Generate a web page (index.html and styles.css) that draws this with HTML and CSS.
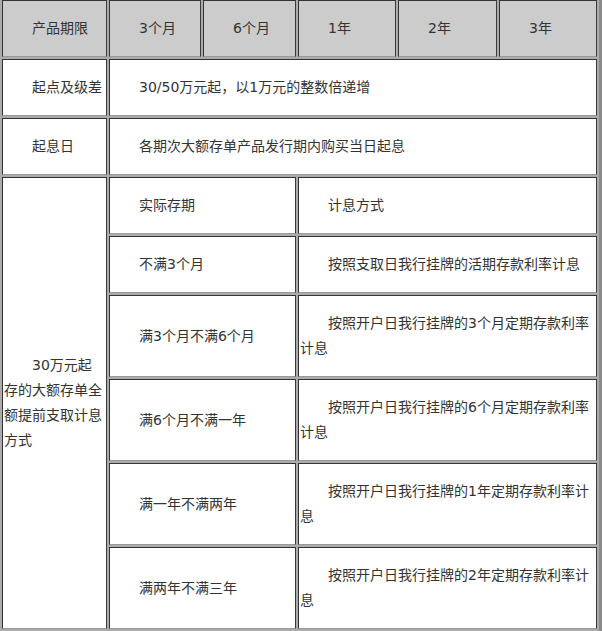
FILE: index.html
```html
<!DOCTYPE html>
<html lang="zh-CN">
<head>
<meta charset="utf-8">
<title>大额存单</title>
<link rel="stylesheet" href="styles.css">
</head>
<body>
<table class="rates">
  <tr class="head">
    <td class="c1"><p>产品期限</p></td>
    <td class="c2"><p>3个月</p></td>
    <td class="c3"><p>6个月</p></td>
    <td class="c4"><p>1年</p></td>
    <td class="c5"><p>2年</p></td>
    <td class="c6"><p>3年</p></td>
  </tr>
  <tr>
    <td><p>起点及级差</p></td>
    <td colspan="5"><p>30/50万元起，以1万元的整数倍递增</p></td>
  </tr>
  <tr>
    <td><p>起息日</p></td>
    <td colspan="5"><p>各期次大额存单产品发行期内购买当日起息</p></td>
  </tr>
  <tr>
    <td rowspan="6"><p>30万元起存的大额存单全额提前支取计息方式</p></td>
    <td colspan="2"><p>实际存期</p></td>
    <td colspan="3"><p>计息方式</p></td>
  </tr>
  <tr>
    <td colspan="2"><p>不满3个月</p></td>
    <td colspan="3"><p>按照支取日我行挂牌的活期存款利率计息</p></td>
  </tr>
  <tr>
    <td colspan="2"><p>满3个月不满6个月</p></td>
    <td colspan="3"><p>按照开户日我行挂牌的3个月定期存款利率计息</p></td>
  </tr>
  <tr>
    <td colspan="2"><p>满6个月不满一年</p></td>
    <td colspan="3"><p>按照开户日我行挂牌的6个月定期存款利率计息</p></td>
  </tr>
  <tr>
    <td colspan="2"><p>满一年不满两年</p></td>
    <td colspan="3"><p>按照开户日我行挂牌的1年定期存款利率计息</p></td>
  </tr>
  <tr>
    <td colspan="2"><p>满两年不满三年</p></td>
    <td colspan="3"><p>按照开户日我行挂牌的2年定期存款利率计息</p></td>
  </tr>
</table>
</body>
</html>
```
FILE: styles.css
```css
html, body {
  margin: 0;
  padding: 0;
  background: #ffffff;
}

.rates {
  table-layout: fixed;
  width: 603px;
  margin: -3px 0 0 -1px;
  border-collapse: separate;
  border-spacing: 2px;
  border-style: solid;
  border-width: 1px 3px 1px 1px;
  border-color: #cfcfcf #8a8a8a #8a8a8a #cfcfcf;
  background: #ababab;
  font-family: "DejaVu Sans", "Noto Sans CJK SC", sans-serif;
  font-size: 14px;
  color: #333333;
}

.rates td {
  box-sizing: border-box;
  padding: 1px;
  border: 1px solid;
  border-color: #333333 #3a3a3a #9a9a9a #333333;
  background: #ffffff;
  vertical-align: middle;
  text-align: left;
}

.rates p {
  margin: 14px 0;
  line-height: 25px;
  text-indent: 2em;
}

.rates .head td {
  background: #cccccc;
}

.c1 { width: 105px; }
.c2 { width: 92px; }
.c3 { width: 93px; }
.c4 { width: 98px; }
.c5 { width: 99px; }
.c6 { width: 98px; }
```
